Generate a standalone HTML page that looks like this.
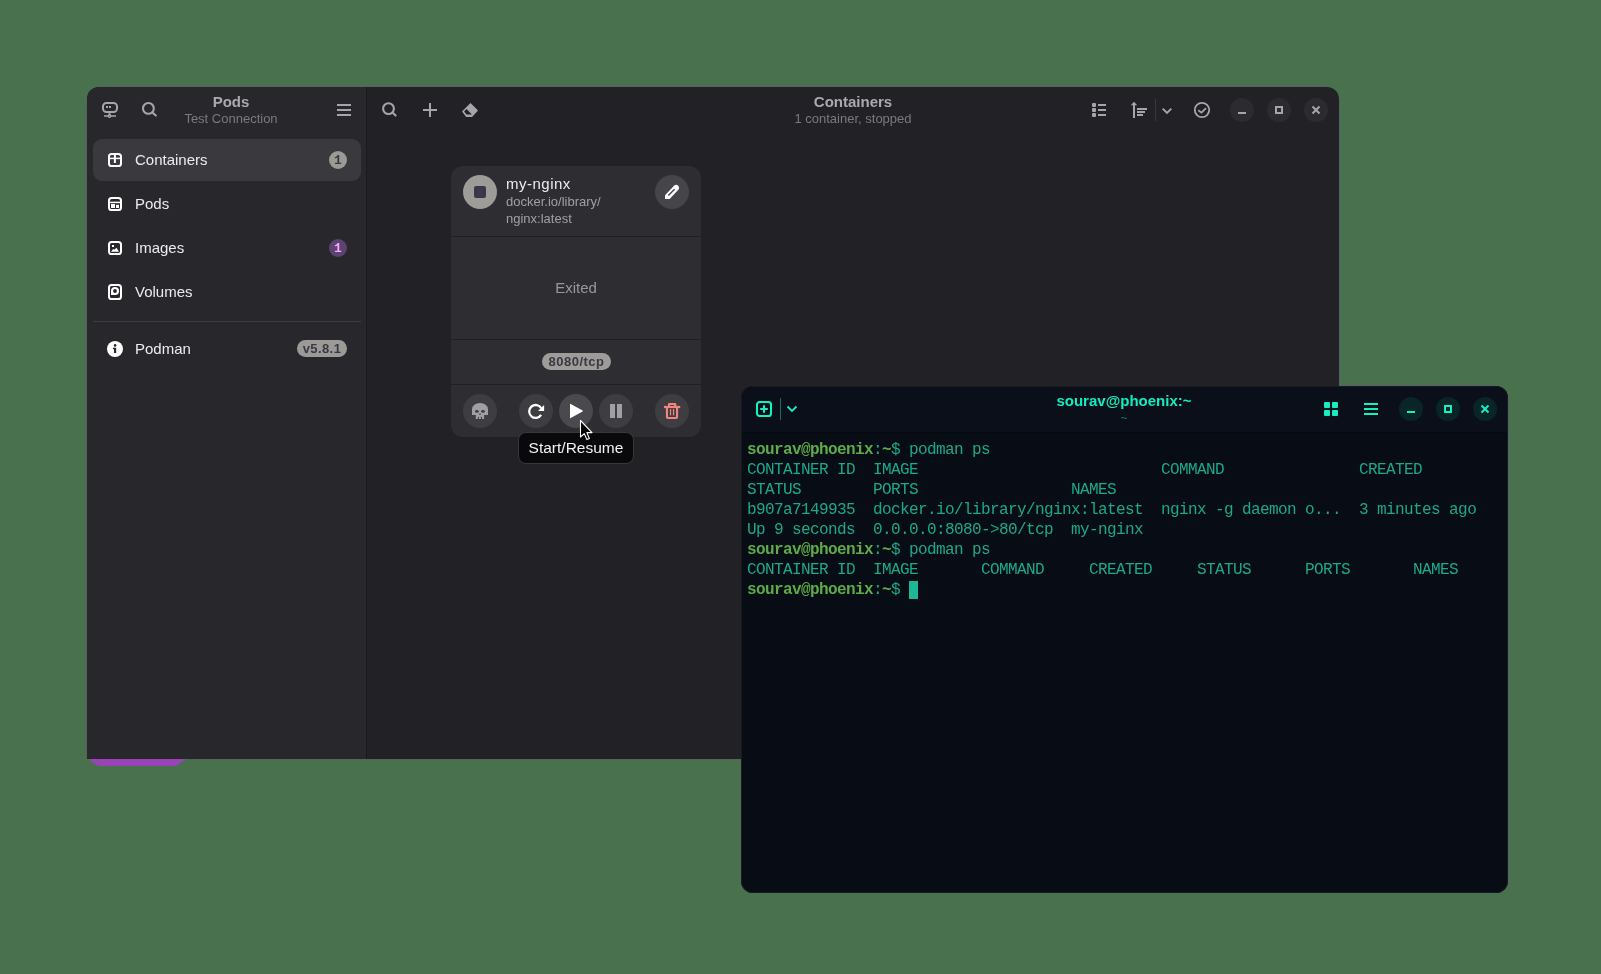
<!DOCTYPE html>
<html><head><meta charset="utf-8">
<style>
*{margin:0;padding:0;box-sizing:border-box}
#win,#term,.t,.rowtxt,.badge,.tl{will-change:transform}
html,body{width:1601px;height:974px;overflow:hidden;background:#4a714d;font-family:"Liberation Sans",sans-serif}
.abs{position:absolute}
svg{position:absolute;overflow:visible}
#win{position:absolute;left:87px;top:87px;width:1252px;height:672px;background:#222226;border-radius:12px 12px 0 0;overflow:hidden}
#side{position:absolute;left:0;top:0;width:279px;height:672px;background:#28282c}
#divider{position:absolute;left:279px;top:0;width:1px;height:672px;background:#1b1b1f}
.t{position:absolute;white-space:nowrap}
.title{font-weight:bold;font-size:15px;color:#ababae;text-align:center}
.sub{font-size:13px;color:#7a7a7d;text-align:center}
.row{position:absolute;left:6px;width:268px;height:42px;border-radius:9px}
.rowtxt{position:absolute;left:48px;font-size:15px;color:#ececee;white-space:nowrap}
.badge{position:absolute;width:18px;height:18px;border-radius:9px;font-family:"Liberation Mono",monospace;font-size:13px;font-weight:bold;text-align:center;line-height:19px}
.circ{position:absolute;width:34px;height:34px;border-radius:17px;background:#3e3e42}
.wbtn{position:absolute;width:24px;height:24px;border-radius:12px;background:#2c2c30}
#card{position:absolute;left:364px;top:79px;width:250px;height:271px;background:#2e2e32;border-radius:12px;overflow:hidden}
.sep{position:absolute;left:0;width:250px;height:1px;background:#1f1f22}
#term{position:absolute;left:741px;top:386px;width:767px;height:507px;background:#080c14;border-radius:12px;overflow:hidden;box-shadow:inset 0 0 0 1px #161a22}
#thead{position:absolute;left:1px;top:1px;width:765px;height:46px;background:#0a0f1a;border-bottom:1px solid #060910;border-radius:11px 11px 0 0}
.tl{position:absolute;left:6px;font-family:"Liberation Mono",monospace;font-size:16px;letter-spacing:-0.6px;white-space:pre;color:#1ca98b;height:20px;line-height:20px}
.pr{color:#5dac49;font-weight:bold}
.tw{color:#b4bcc0}
.tbtn{position:absolute;width:24px;height:24px;border-radius:12px;background:#0a2528}
</style></head><body>

<div id="win">
  <div id="side">
    <!-- header: server icon -->
    <svg style="left:15px;top:15px" width="16" height="16" viewBox="0 0 16 16" fill="none" stroke="#a6a6a9" stroke-width="2">
      <rect x="1" y="1" width="14" height="9" rx="3.5"/>
      <rect x="4" y="4" width="2" height="2" fill="#a6a6a9" stroke="none"/>
      <rect x="7" y="4" width="2" height="2" fill="#a6a6a9" stroke="none"/>
      <path d="M7.5 11v2.2M2 14h4M9 14h5" stroke-width="1.6"/><circle cx="7.5" cy="14" r="1.2" stroke-width="1.4"/>
    </svg>
    <!-- search -->
    <svg style="left:54px;top:14px" width="16" height="16" viewBox="0 0 16 16" fill="none" stroke="#a6a6a9" stroke-width="2.1">
      <circle cx="7.4" cy="7.4" r="5.4"/><path d="M11.4 11.4L14.8 14.6" stroke-linecap="round"/>
    </svg>
    <div class="t title" style="left:94px;top:6px;width:100px">Pods</div>
    <div class="t sub" style="left:64px;top:24px;width:160px">Test Connection</div>
    <!-- menu -->
    <div class="abs" style="left:250px;top:17px;width:14px;height:2px;background:#a6a6a9"></div>
    <div class="abs" style="left:250px;top:22px;width:14px;height:2px;background:#a6a6a9"></div>
    <div class="abs" style="left:250px;top:27px;width:14px;height:2px;background:#a6a6a9"></div>

    <!-- rows -->
    <div class="row" style="top:52px;background:#3a3a3e"></div>
    <svg style="left:21px;top:66px" width="14" height="14" viewBox="0 0 14 14" fill="none" stroke="#ffffff" stroke-width="2">
      <rect x="1" y="1" width="12" height="12" rx="2.6"/><path d="M1 5.4h12" stroke-width="1.5"/><path d="M6.9 1v9" />
    </svg>
    <div class="rowtxt" style="top:64px">Containers</div>
    <div class="badge" style="left:242px;top:64px;background:#9c9a96;color:#3b3846">1</div>

    <svg style="left:21px;top:110px" width="14" height="14" viewBox="0 0 14 14" fill="none" stroke="#ffffff" stroke-width="2">
      <rect x="1" y="1" width="12" height="12" rx="2.6"/><path d="M1 5.4h12" stroke-width="1.5"/>
      <rect x="3" y="7" width="4" height="4" fill="#fff" stroke="none"/><rect x="8" y="7.8" width="3" height="3.2" fill="#fff" stroke="none"/>
    </svg>
    <div class="rowtxt" style="top:108px">Pods</div>

    <svg style="left:21px;top:154px" width="14" height="14" viewBox="0 0 14 14" fill="none" stroke="#ffffff" stroke-width="2">
      <rect x="1" y="1" width="12" height="12" rx="2.6"/>
      <path d="M3 10.8L5.1 7.9 6.4 8.8 8.5 6.8 11 10.8z" fill="#fff" stroke="none"/><rect x="4" y="4" width="2" height="2" fill="#fff" stroke="none"/>
    </svg>
    <div class="rowtxt" style="top:152px">Images</div>
    <div class="badge" style="left:242px;top:152px;background:#5c4373;color:#f7a8f7">1</div>

    <svg style="left:21px;top:197px" width="14" height="16" viewBox="0 0 14 16" fill="none" stroke="#ffffff" stroke-width="2">
      <rect x="1" y="1" width="12" height="14" rx="2.6"/>
      <path d="M3 11V7A4 4 0 1 1 7 11Z" fill="#fff" stroke="none"/><circle cx="7" cy="7" r="1.9" fill="#28282c" stroke="none"/>
    </svg>
    <div class="rowtxt" style="top:196px">Volumes</div>

    <div class="abs" style="left:6px;top:234px;width:268px;height:1px;background:#3c3c40"></div>

    <svg style="left:20px;top:254px" width="16" height="16" viewBox="0 0 16 16">
      <circle cx="8" cy="8" r="8" fill="#ffffff"/><rect x="7" y="6.8" width="2.2" height="5.2" fill="#28282c"/><rect x="6" y="6.8" width="2" height="1.4" fill="#28282c"/><circle cx="8.1" cy="4.4" r="1.3" fill="#28282c"/>
    </svg>
    <div class="rowtxt" style="top:253px">Podman</div>
    <div class="abs" style="left:210px;top:253px;width:50px;height:17px;border-radius:9px;background:#9c9a96;color:#3b3846;font-size:13px;font-weight:bold;text-align:center;line-height:18px;letter-spacing:0.4px">v5.8.1</div>
  </div>
  <div id="divider"></div>

  <!-- content header -->
  <svg style="left:294px;top:14px" width="16" height="16" viewBox="0 0 16 16" fill="none" stroke="#a6a6a9" stroke-width="2.1">
    <circle cx="7.5" cy="7.6" r="5.4"/><path d="M11.5 11.6L14.6 14.6" stroke-linecap="round"/>
  </svg>
  <div class="abs" style="left:336px;top:16px;width:14px;height:2px;top:22px;background:#a6a6a9"></div>
  <div class="abs" style="left:342px;top:16px;width:2px;height:14px;background:#a6a6a9"></div>
  <svg style="left:375px;top:15px" width="16" height="16" viewBox="0 0 16 16">
    <path d="M8.5 0.9L15.6 8.1Q16 8.5 15.6 8.9L10.3 14.8Q10.1 15 9.8 15H4.5Q4.2 15 4 14.8L0.4 10Q0 9.5 0.4 9Z" fill="#a6a6a9"/>
    <path d="M4.5 7L2.1 9.5 4.6 12.5H9.9Z" fill="#222226"/>
  </svg>
  <div class="t title" style="left:666px;top:6px;width:200px">Containers</div>
  <div class="t sub" style="left:666px;top:24px;width:200px">1 container, stopped</div>

  <!-- list -->
  <div class="abs" style="left:1005px;top:16px;width:4px;height:4px;border-radius:1px;background:#a6a6a9"></div>
  <div class="abs" style="left:1005px;top:21px;width:4px;height:4px;border-radius:1px;background:#a6a6a9"></div>
  <div class="abs" style="left:1005px;top:26px;width:4px;height:4px;border-radius:1px;background:#a6a6a9"></div>
  <div class="abs" style="left:1011px;top:17px;width:8px;height:2px;background:#a6a6a9"></div>
  <div class="abs" style="left:1011px;top:22px;width:8px;height:2px;background:#a6a6a9"></div>
  <div class="abs" style="left:1011px;top:27px;width:8px;height:2px;background:#a6a6a9"></div>
  <!-- sort -->
  <svg style="left:1043px;top:14px" width="18" height="18" viewBox="0 0 18 18" fill="#a6a6a9">
    <path d="M4 0.7L7.2 4.3H5V17H3V4.3H0.8Z"/><rect x="7" y="7" width="10" height="2"/><rect x="7" y="10" width="8" height="2"/><rect x="7" y="13" width="6" height="2"/>
  </svg>
  <div class="abs" style="left:1068px;top:12px;width:1px;height:22px;background:#38383c"></div>
  <svg style="left:1075px;top:21px" width="10" height="6" viewBox="0 0 10 6" fill="none" stroke="#a6a6a9" stroke-width="1.9">
    <path d="M0.7 0.7L5 5 9.3 0.7"/>
  </svg>
  <svg style="left:1107px;top:15px" width="16" height="16" viewBox="0 0 16 16" fill="none" stroke="#a6a6a9" stroke-width="1.8">
    <circle cx="8" cy="8" r="7.2"/><path d="M4.3 8.2L7.5 10.6 12 6.2"/>
  </svg>
  <div class="wbtn" style="left:1143px;top:11px"></div>
  <div class="abs" style="left:1151px;top:25px;width:8px;height:2px;background:#a6a6a9"></div>
  <div class="wbtn" style="left:1180px;top:11px"></div>
  <div class="abs" style="left:1188px;top:19px;width:8px;height:8px;border:2px solid #a6a6a9"></div>
  <div class="wbtn" style="left:1217px;top:11px"></div>
  <svg style="left:1225px;top:19px" width="8" height="8" viewBox="0 0 8 8" stroke="#a6a6a9" stroke-width="2">
    <path d="M0.5 0.5l7 7M7.5 0.5l-7 7"/>
  </svg>

  <!-- card -->
  <div id="card">
    <div class="circ" style="left:12px;top:9px;background:#9e9c98"></div>
    <div class="abs" style="left:23px;top:20px;width:12px;height:12px;border-radius:2px;background:#3b3748"></div>
    <div class="t" style="left:55px;top:9px;font-size:15px;color:#ececee;letter-spacing:0.5px">my-nginx</div>
    <div class="t" style="left:55px;top:27px;font-size:13px;color:#a0a0a3;line-height:17px">docker.io/library/<br>nginx:latest</div>
    <div class="circ" style="left:204px;top:9px;background:#46464a"></div>
    <svg style="left:0;top:0" width="250" height="60" viewBox="451 166 250 60">
      <path d="M665 199L665 195.2 674.3 185.4A3 3 0 0 1 678.5 189.6L669.6 199Z" fill="#ffffff"/>
      <path d="M668.3 195.6L674.6 189.2" stroke="#46464a" stroke-width="1.4"/>
    </svg>
    <div class="sep" style="top:70px"></div>
    <div class="t" style="left:0;width:250px;top:113px;text-align:center;font-size:15px;color:#98989b">Exited</div>
    <div class="sep" style="top:173px"></div>
    <div class="abs" style="left:91px;top:187px;width:69px;height:17px;border-radius:9px;background:#9e9c98;color:#3b3846;font-size:13px;font-weight:bold;text-align:center;line-height:18.5px;letter-spacing:0.5px">8080/tcp</div>
    <div class="sep" style="top:218px"></div>
    <div class="circ" style="left:12px;top:228px"></div>
    <div class="circ" style="left:68px;top:228px"></div>
    <div class="circ" style="left:108px;top:228px;background:#4a4a4e"></div>
    <div class="circ" style="left:148px;top:228px"></div>
    <div class="circ" style="left:204px;top:228px"></div>
    <svg style="left:0;top:0" width="250" height="271" viewBox="451 166 250 271">
      <!-- skull origin 472,403 -->
      <g transform="translate(472 403)">
        <path d="M0 12V6.4A8 6.4 0 0 1 16 6.4V12H12.1V16.1H3.8V12Z" fill="#a0a0a2"/>
        <ellipse cx="4.9" cy="8.45" rx="1.9" ry="1.35" fill="#3e3e42"/><ellipse cx="11" cy="8.45" rx="1.9" ry="1.35" fill="#3e3e42"/>
        <path d="M8 10.1L9.1 11.8H6.9Z" fill="#3e3e42"/>
        <rect x="5.9" y="13.8" width="1" height="2.4" fill="#3e3e42"/><rect x="8.9" y="13.8" width="1.1" height="2.4" fill="#3e3e42"/>
      </g>
      <!-- restart origin 528,403 -->
      <g transform="translate(528 403)">
        <path d="M13.1 11.9A6.45 6.45 0 1 1 13.2 5.2" fill="none" stroke="#ffffff" stroke-width="2.3"/>
        <path d="M10 8.1H16.1V2.05Z" fill="#ffffff"/>
      </g>
      <!-- play -->
      <path d="M570 404.2Q570 403.5 570.7 403.9L582.6 410.6Q583 411 582.6 411.4L570.7 418.1Q570 418.5 570 417.8Z" fill="#ffffff"/>
      <!-- pause -->
      <rect x="610" y="404" width="5" height="14" fill="#a0a0a2"/><rect x="617" y="404" width="5" height="14" fill="#a0a0a2"/>
      <!-- trash origin 664,403 -->
      <g transform="translate(664 403)" fill="#f3847f">
        <path d="M4 3V1.2Q4 0 5.2 0H11.1Q12.3 0 12.3 1.2V3H10V2H6.1V3Z"/>
        <rect x="0" y="2.9" width="16.2" height="2.2"/>
        <path d="M1.9 5V14.1Q1.9 16.1 3.9 16.1H12.1Q14.1 16.1 14.1 14.1V5H12V13.9H4V5Z"/>
        <rect x="5.9" y="6.1" width="1.2" height="6.3"/><rect x="8.9" y="6.1" width="1.3" height="6.3"/>
      </g>
    </svg>
  </div>

  <!-- tooltip -->
  <div class="abs" style="left:431px;top:345px;width:116px;height:32px;border-radius:8px;background:#09090b;border:1px solid #38383c"></div>
  <div class="t" style="left:431px;top:351px;width:116px;text-align:center;font-size:15.5px;color:#f2f2f2;top:352px">Start/Resume</div>
  <!-- cursor -->
  <svg style="left:493px;top:333px" width="14" height="22" viewBox="0 0 14 22">
    <path d="M0.5 0.5V17L4.3 13.6 6.9 19.6 9.4 18.6 6.9 12.6H12Z" fill="#000" stroke="#fff" stroke-width="1.1" stroke-linejoin="round"/>
  </svg>
</div>
<svg style="left:0;top:0" width="1601" height="974" viewBox="0 0 1601 974"><path d="M89.5 759H186L176 766H99Q93 764 89.5 759Z" fill="#9844b6"/></svg>

<!-- edge artifacts -->
<div class="abs" style="left:99px;top:86px;width:1228px;height:1px;background:rgba(120,60,150,0.28)"></div>
<div class="abs" style="left:86px;top:99px;width:1px;height:660px;background:rgba(120,60,150,0.28)"></div>
<div class="abs" style="left:1339px;top:99px;width:1px;height:287px;background:rgba(120,60,150,0.28)"></div>
<div class="abs" style="left:186px;top:759px;width:555px;height:1px;background:rgba(120,60,150,0.22)"></div>
<div class="abs" style="left:1340px;top:385px;width:156px;height:1px;background:rgba(120,60,150,0.28)"></div>
<div class="abs" style="left:1508px;top:398px;width:1px;height:483px;background:rgba(120,60,150,0.28)"></div>
<!-- terminal -->
<div id="term">
  <div id="thead"></div>
  <svg style="left:15px;top:15px" width="16" height="16" viewBox="0 0 16 16" fill="none" stroke="#14f0c0" stroke-width="2.1">
    <rect x="1" y="1" width="14" height="14" rx="2.6"/><path d="M8 4.2v7.6M4.2 8h7.6" stroke-width="2"/>
  </svg>
  <div class="abs" style="left:39px;top:12px;width:1px;height:22px;background:#0e6f5d"></div>
  <svg style="left:45px;top:18px" width="12" height="10" viewBox="0 0 12 10" fill="none" stroke="#14f0c0" stroke-width="1.8">
    <path d="M1.5 2.5l4.5 4.5 4.5-4.5"/>
  </svg>
  <div class="t" style="left:283px;top:6px;width:200px;text-align:center;font-weight:bold;font-size:15px;color:#12ecbe">sourav@phoenix:~</div>
  <div class="t" style="left:283px;top:25px;width:200px;text-align:center;font-size:12px;color:#0f7a66">~</div>
  <div class="abs" style="left:583px;top:16px;width:6px;height:6px;border-radius:1px;background:#14eec0"></div>
  <div class="abs" style="left:591px;top:16px;width:6px;height:6px;border-radius:1px;background:#14eec0"></div>
  <div class="abs" style="left:583px;top:24px;width:6px;height:6px;border-radius:1px;background:#14eec0"></div>
  <div class="abs" style="left:591px;top:24px;width:6px;height:6px;border-radius:1px;background:#14eec0"></div>
  <div class="abs" style="left:623px;top:17px;width:14px;height:2px;background:#14f0c0"></div>
  <div class="abs" style="left:623px;top:22px;width:14px;height:2px;background:#14f0c0"></div>
  <div class="abs" style="left:623px;top:27px;width:14px;height:2px;background:#14f0c0"></div>
  <div class="tbtn" style="left:658px;top:11px"></div>
  <div class="abs" style="left:666px;top:25px;width:8px;height:2px;background:#14f0c0"></div>
  <div class="tbtn" style="left:695px;top:11px"></div>
  <div class="abs" style="left:703px;top:19px;width:8px;height:8px;border:2px solid #14f0c0"></div>
  <div class="tbtn" style="left:732px;top:11px"></div>
  <svg style="left:740px;top:19px" width="8" height="8" viewBox="0 0 8 8" stroke="#14f0c0" stroke-width="2">
    <path d="M0.5 0.5l7 7M7.5 0.5l-7 7"/>
  </svg>

  <div class="tl" style="top:54px"><span class="pr">sourav@phoenix</span>:<span class="pr">~</span>$ podman ps</div>
  <div class="tl" style="top:74px">CONTAINER ID  IMAGE                           COMMAND               CREATED</div>
  <div class="tl" style="top:94px">STATUS        PORTS                 NAMES</div>
  <div class="tl" style="top:114px">b907a7149935  docker.io/library/nginx:latest  nginx -g daemon o...  3 minutes ago</div>
  <div class="tl" style="top:134px">Up 9 seconds  0.0.0.0:8080-&gt;80/tcp  my-nginx</div>
  <div class="tl" style="top:154px"><span class="pr">sourav@phoenix</span>:<span class="pr">~</span>$ podman ps</div>
  <div class="tl" style="top:174px">CONTAINER ID  IMAGE       COMMAND     CREATED     STATUS      PORTS       NAMES</div>
  <div class="tl" style="top:194px"><span class="pr">sourav@phoenix</span>:<span class="pr">~</span>$ <span style="background:#1fb596">&nbsp;</span></div>
</div>

</body></html>
